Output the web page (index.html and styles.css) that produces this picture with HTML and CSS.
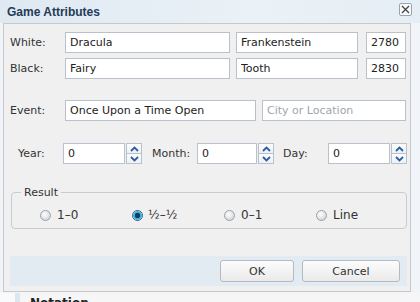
FILE: index.html
```html
<!DOCTYPE html>
<html lang="en">
<head>
  <meta charset="UTF-8">
  <title>Game Attributes</title>
  <link rel="stylesheet" href="styles.css">
</head>
<body>
  <div class="dialog">
    <div class="titlebar">
      <span class="title">Game Attributes</span>
      <button class="close" title="Close">
        <svg width="9" height="9" viewBox="0 0 9 9"><path d="M1 1L8 8M8 1L1 8" stroke="#444" stroke-width="1.3"/></svg>
      </button>
    </div>

    <div class="panel">
      <div class="row">
        <label class="lbl">White:</label>
        <input class="txt w-name" type="text" value="Dracula">
        <input class="txt w-last" type="text" value="Frankenstein">
        <input class="txt w-elo" type="text" value="2780">
      </div>
      <div class="row">
        <label class="lbl">Black:</label>
        <input class="txt w-name" type="text" value="Fairy">
        <input class="txt w-last" type="text" value="Tooth">
        <input class="txt w-elo" type="text" value="2830">
      </div>
      <div class="row row-event">
        <label class="lbl">Event:</label>
        <input class="txt w-event" type="text" value="Once Upon a Time Open">
        <input class="txt w-site" type="text" placeholder="City or Location">
      </div>

      <div class="row row-date">
        <label class="dlbl lbl-year">Year:</label>
        <div class="spin">
          <input class="txt" type="text" value="0">
          <div class="arrows">
            <span class="arrow"><svg width="9" height="6" viewBox="0 0 9 6"><path d="M1 5L4.5 1.5L8 5" fill="none" stroke="#2d5ea0" stroke-width="1.8"/></svg></span>
            <span class="arrow"><svg width="9" height="6" viewBox="0 0 9 6"><path d="M1 1L4.5 4.5L8 1" fill="none" stroke="#2d5ea0" stroke-width="1.8"/></svg></span>
          </div>
        </div>
        <label class="dlbl lbl-month">Month:</label>
        <div class="spin spin-month">
          <input class="txt" type="text" value="0">
          <div class="arrows">
            <span class="arrow"><svg width="9" height="6" viewBox="0 0 9 6"><path d="M1 5L4.5 1.5L8 5" fill="none" stroke="#2d5ea0" stroke-width="1.8"/></svg></span>
            <span class="arrow"><svg width="9" height="6" viewBox="0 0 9 6"><path d="M1 1L4.5 4.5L8 1" fill="none" stroke="#2d5ea0" stroke-width="1.8"/></svg></span>
          </div>
        </div>
        <label class="dlbl lbl-day">Day:</label>
        <div class="spin">
          <input class="txt" type="text" value="0">
          <div class="arrows">
            <span class="arrow"><svg width="9" height="6" viewBox="0 0 9 6"><path d="M1 5L4.5 1.5L8 5" fill="none" stroke="#2d5ea0" stroke-width="1.8"/></svg></span>
            <span class="arrow"><svg width="9" height="6" viewBox="0 0 9 6"><path d="M1 1L4.5 4.5L8 1" fill="none" stroke="#2d5ea0" stroke-width="1.8"/></svg></span>
          </div>
        </div>
      </div>

      <fieldset class="result">
        <legend>Result</legend>
        <label class="opt opt-1"><span class="radio"></span>1–0</label>
        <label class="opt opt-2"><span class="radio checked"></span>½–½</label>
        <label class="opt opt-3"><span class="radio"></span>0–1</label>
        <label class="opt opt-4"><span class="radio"></span>Line</label>
      </fieldset>

      <div class="buttonbar">
        <button class="btn btn-ok">OK</button>
        <button class="btn btn-cancel">Cancel</button>
      </div>
    </div>

    <div class="below">
      <span class="below-text">Notation</span>
    </div>
  </div>
</body>
</html>
```

FILE: styles.css
```css
body {
  margin: 0;
  font-family: "DejaVu Sans", Verdana, sans-serif;
  font-size: 11px;
  color: #333;
  background: #f4f6f8;
}
.dialog {
  width: 420px;
  height: 302px;
  overflow: hidden;
  background: #f1f5f9;
}
.titlebar {
  height: 23px;
  display: flex;
  align-items: center;
  justify-content: space-between;
  padding: 0 8px 0 7px;
  background: linear-gradient(to right, #dfe9f2, #eaf1f7 60%, #e6eef5);
}
.title {
  font-family: "Liberation Sans", Arial, sans-serif;
  font-weight: bold;
  font-size: 12px;
  color: #243b55;
}
.close {
  width: 13px;
  height: 13px;
  padding: 0;
  margin-top: -4px;
  border: 1px solid #9aa5b1;
  border-radius: 2px;
  background: #f7f9fb;
  display: flex;
  align-items: center;
  justify-content: center;
}
.panel {
  margin-left: 3px;
  width: 408px;
  height: 269px;
  border: 1px solid #c8c8c8;
  background: #f0f0f0;
  padding: 8px 4px 0 6px;
  box-sizing: border-box;
  display: flex;
  flex-direction: column;
}
.row {
  display: flex;
  align-items: center;
  height: 21px;
  margin-bottom: 5px;
}
.row-event {
  margin-top: 16px;
}
.row-date {
  margin-top: 17px;
}
.lbl {
  width: 55px;
  flex: none;
}
.txt {
  height: 21px;
  box-sizing: border-box;
  border: 1px solid #b9c1cc;
  background: #fff;
  padding: 0 4px;
  font-family: inherit;
  font-size: 11px;
  color: #222;
  outline: none;
}
.txt::placeholder {
  color: #a0a6ad;
}
.w-name { width: 166px; margin-right: 6px; }
.w-last { width: 122px; margin-right: 8px; }
.w-elo { width: 40px; }
.w-event { width: 192px; margin-right: 6px; }
.w-site { width: 144px; }

.dlbl { flex: none; width: 45px; }
.lbl-year { margin-left: 8px; }
.lbl-month { margin-left: 10px; }
.lbl-day { margin-left: 9px; }
.spin {
  display: flex;
  height: 21px;
  flex: none;
}
.spin .txt {
  width: 62px;
}
.spin-month .txt {
  width: 60px;
}
.arrows {
  width: 16px;
  margin-left: 1px;
  display: flex;
  flex-direction: column;
}
.arrow {
  flex: 1;
  display: flex;
  align-items: center;
  justify-content: center;
  border: 1px solid #b9c1cc;
  background: linear-gradient(#fbfcfd, #eef1f4);
}
.arrow + .arrow {
  border-top: none;
}

.result {
  margin: 17px 0 0 1px;
  width: 396px;
  height: 43px;
  box-sizing: border-box;
  border: 1px solid #c6ccd3;
  border-radius: 4px;
  padding: 0;
  position: relative;
}
.result legend {
  margin-left: 9px;
  padding: 0 3px;
  font-size: 11px;
  color: #333;
}
.opt {
  position: absolute;
  top: 9px;
  display: flex;
  align-items: center;
  font-size: 12px;
  color: #333;
}
.opt-1 { left: 28px; }
.opt-2 { left: 120px; }
.opt-3 { left: 212px; }
.opt-4 { left: 304px; }
.radio {
  width: 11px;
  height: 11px;
  border-radius: 50%;
  border: 1px solid #9aa2ab;
  background: radial-gradient(circle at 40% 35%, #ffffff, #d8dbde 70%);
  margin-right: 6px;
  box-sizing: border-box;
}
.radio.checked {
  border-color: #2c628b;
  background: radial-gradient(circle, #0d3e66 0 2.5px, #3fb0e6 3px 4px, #dff3fc 4.5px);
  margin-right: 5px;
}

.buttonbar {
  margin: 27px 0 0 0;
  width: 397px;
  height: 30px;
  background: #e3ebf2;
  display: flex;
  align-items: center;
  justify-content: flex-end;
  padding-right: 7px;
  box-sizing: border-box;
  gap: 8px;
}
.btn {
  height: 22px;
  border: 1px solid #b3bac3;
  border-radius: 3px;
  background: linear-gradient(#fcfcfc, #eaeaea);
  font-family: inherit;
  font-size: 11px;
  color: #333;
  padding: 0;
}
.btn-ok { width: 74px; }
.btn-cancel { width: 98px; }

.below {
  height: 10px;
  margin-top: 1px;
  background: linear-gradient(to right, #fafafa 15px, #dce6f0 15px, #dce6f0 20px, #f6f6f6 20px);
  padding-left: 30px;
  overflow: hidden;
}
.below-text {
  display: block;
  font-weight: bold;
  font-size: 12px;
  line-height: 14px;
  color: #222;
  margin-top: 3px;
}
```
